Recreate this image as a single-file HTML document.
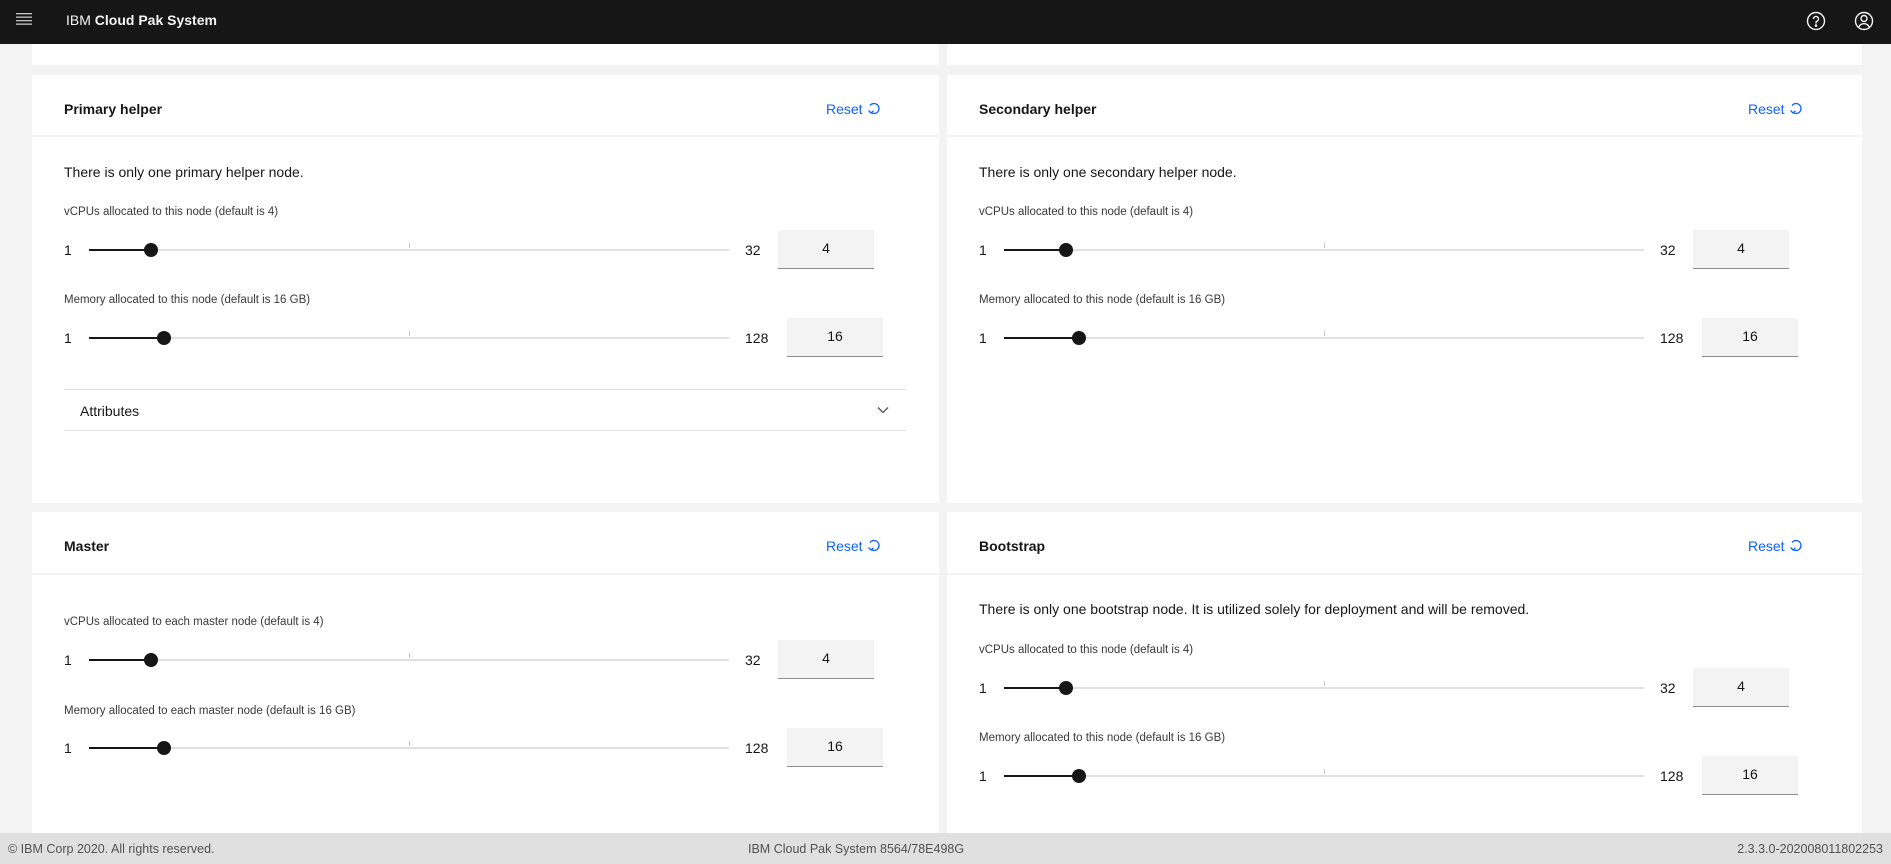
<!DOCTYPE html>
<html><head><meta charset="utf-8"><style>
*{box-sizing:border-box;margin:0;padding:0}
body{width:1891px;height:864px;overflow:hidden;background:#f3f3f3;font-family:"Liberation Sans",sans-serif;color:#161616;position:relative}
.a{position:absolute}
.hdr{left:0;top:0;width:1891px;height:44px;background:#161616}
.card{background:#fff}
.title{font-size:14px;font-weight:bold}
.reset{color:#0f62fe;font-size:14px}
.t14{font-size:14px}
.lbl{font-size:11.5px;color:#393939}
.num{font-size:14px}
.track{height:2px;background:#e0e0e0}
.fill{height:2px;background:#161616}
.thumb{width:14px;height:14px;border-radius:50%;background:#161616}
.tick{width:1px;height:5px;background:#c6c6c6}
.inp{background:#f3f3f3;border-bottom:1px solid #8d8d8d;font-size:14px;text-align:center}
.line{height:2px;background:#f3f3f3}
</style></head><body>
<div class="a hdr"></div>
<svg class="a" style="left:16px;top:13px" width="16" height="12"><rect y="0" width="16" height="1.3" fill="#c6c6c6"/><rect y="3.5" width="16" height="1.3" fill="#c6c6c6"/><rect y="7" width="16" height="1.3" fill="#c6c6c6"/><rect y="10.5" width="16" height="1.3" fill="#c6c6c6"/></svg>
<div class="a" style="left:66px;top:12px;font-size:14px;color:#f4f4f4">IBM <b>Cloud Pak System</b></div>
<svg class="a" style="left:1806px;top:11px" width="20" height="20" viewBox="0 0 20 20" fill="none" stroke="#f4f4f4" stroke-width="1.4"><circle cx="10" cy="10" r="8.5"/><path d="M7.5 8a2.5 2.5 0 1 1 3.5 2.2c-.7.3-1 .8-1 1.5v.8"/><circle cx="10" cy="14.6" r=".6" fill="#f4f4f4"/></svg>
<svg class="a" style="left:1854px;top:11px" width="20" height="20" viewBox="0 0 20 20" fill="none" stroke="#f4f4f4" stroke-width="1.4"><circle cx="10" cy="10" r="8.5"/><circle cx="10" cy="7.5" r="3"/><path d="M4.8 16c1-2.3 3-3.3 5.2-3.3s4.2 1 5.2 3.3"/></svg>

<div class="a card" style="left:32px;top:44px;width:907px;height:21px"></div>
<div class="a card" style="left:947px;top:44px;width:915px;height:21px"></div>

<!-- Primary helper -->
<div class="a card" style="left:32px;top:75px;width:907px;height:428px"></div>
<div class="a line" style="left:32px;top:135px;width:907px"></div>
<div class="a title" style="left:64px;top:101px">Primary helper</div>
<div class="a reset" style="left:826px;top:101px">Reset</div>
<svg class="a" style="left:867px;top:101px" width="14" height="14" viewBox="0 0 14 14" fill="none" stroke="#0f62fe" stroke-width="1.3"><path d="M4 11.5A5 5 0 1 0 3 4.5"/><path d="M1.5 9.5L4 12l2.5-2.2"/></svg>
<div class="a t14" style="left:64px;top:164px">There is only one primary helper node.</div>
<div class="a lbl" style="left:64px;top:206px">vCPUs allocated to this node (default is 4)</div>
<div class="a num" style="left:64px;top:242px">1</div>
<div class="a track" style="left:89px;top:249px;width:640px"></div><div class="a tick" style="left:409px;top:243px"></div>
<div class="a fill" style="left:89px;top:249px;width:62px"></div><div class="a thumb" style="left:144px;top:243px"></div>
<div class="a num" style="left:745px;top:242px">32</div>
<div class="a inp" style="left:778px;top:230px;width:96px;height:39px;line-height:37px">4</div>
<div class="a lbl" style="left:64px;top:294px">Memory allocated to this node (default is 16 GB)</div>
<div class="a num" style="left:64px;top:330px">1</div>
<div class="a track" style="left:89px;top:337px;width:640px"></div><div class="a tick" style="left:409px;top:331px"></div>
<div class="a fill" style="left:89px;top:337px;width:75px"></div><div class="a thumb" style="left:157px;top:331px"></div>
<div class="a num" style="left:745px;top:330px">128</div>
<div class="a inp" style="left:787px;top:318px;width:96px;height:39px;line-height:37px">16</div>
<div class="a" style="left:64px;top:389px;width:842px;height:1px;background:#e0e0e0"></div>
<div class="a t14" style="left:80px;top:403px">Attributes</div>
<svg class="a" style="left:877px;top:406px" width="12" height="8" viewBox="0 0 12 8" fill="none" stroke="#525252" stroke-width="1.3"><path d="M1 1.5l5 5 5-5"/></svg>
<div class="a" style="left:64px;top:430px;width:842px;height:1px;background:#e0e0e0"></div>

<!-- Secondary helper -->
<div class="a card" style="left:947px;top:75px;width:915px;height:428px"></div>
<div class="a line" style="left:947px;top:135px;width:915px"></div>
<div class="a title" style="left:979px;top:101px">Secondary helper</div>
<div class="a reset" style="left:1748px;top:101px">Reset</div>
<svg class="a" style="left:1789px;top:101px" width="14" height="14" viewBox="0 0 14 14" fill="none" stroke="#0f62fe" stroke-width="1.3"><path d="M4 11.5A5 5 0 1 0 3 4.5"/><path d="M1.5 9.5L4 12l2.5-2.2"/></svg>
<div class="a t14" style="left:979px;top:164px">There is only one secondary helper node.</div>
<div class="a lbl" style="left:979px;top:206px">vCPUs allocated to this node (default is 4)</div>
<div class="a num" style="left:979px;top:242px">1</div>
<div class="a track" style="left:1004px;top:249px;width:640px"></div><div class="a tick" style="left:1324px;top:243px"></div>
<div class="a fill" style="left:1004px;top:249px;width:62px"></div><div class="a thumb" style="left:1059px;top:243px"></div>
<div class="a num" style="left:1660px;top:242px">32</div>
<div class="a inp" style="left:1693px;top:230px;width:96px;height:39px;line-height:37px">4</div>
<div class="a lbl" style="left:979px;top:294px">Memory allocated to this node (default is 16 GB)</div>
<div class="a num" style="left:979px;top:330px">1</div>
<div class="a track" style="left:1004px;top:337px;width:640px"></div><div class="a tick" style="left:1324px;top:331px"></div>
<div class="a fill" style="left:1004px;top:337px;width:75px"></div><div class="a thumb" style="left:1072px;top:331px"></div>
<div class="a num" style="left:1660px;top:330px">128</div>
<div class="a inp" style="left:1702px;top:318px;width:96px;height:39px;line-height:37px">16</div>

<!-- Master -->
<div class="a card" style="left:32px;top:512px;width:907px;height:330px"></div>
<div class="a line" style="left:32px;top:573px;width:907px"></div>
<div class="a title" style="left:64px;top:538px">Master</div>
<div class="a reset" style="left:826px;top:538px">Reset</div>
<svg class="a" style="left:867px;top:538px" width="14" height="14" viewBox="0 0 14 14" fill="none" stroke="#0f62fe" stroke-width="1.3"><path d="M4 11.5A5 5 0 1 0 3 4.5"/><path d="M1.5 9.5L4 12l2.5-2.2"/></svg>
<div class="a lbl" style="left:64px;top:616px">vCPUs allocated to each master node (default is 4)</div>
<div class="a num" style="left:64px;top:652px">1</div>
<div class="a track" style="left:89px;top:659px;width:640px"></div><div class="a tick" style="left:409px;top:653px"></div>
<div class="a fill" style="left:89px;top:659px;width:62px"></div><div class="a thumb" style="left:144px;top:653px"></div>
<div class="a num" style="left:745px;top:652px">32</div>
<div class="a inp" style="left:778px;top:640px;width:96px;height:39px;line-height:37px">4</div>
<div class="a lbl" style="left:64px;top:705px">Memory allocated to each master node (default is 16 GB)</div>
<div class="a num" style="left:64px;top:740px">1</div>
<div class="a track" style="left:89px;top:747px;width:640px"></div><div class="a tick" style="left:409px;top:741px"></div>
<div class="a fill" style="left:89px;top:747px;width:75px"></div><div class="a thumb" style="left:157px;top:741px"></div>
<div class="a num" style="left:745px;top:740px">128</div>
<div class="a inp" style="left:787px;top:728px;width:96px;height:39px;line-height:37px">16</div>

<!-- Bootstrap -->
<div class="a card" style="left:947px;top:512px;width:915px;height:330px"></div>
<div class="a line" style="left:947px;top:573px;width:915px"></div>
<div class="a title" style="left:979px;top:538px">Bootstrap</div>
<div class="a reset" style="left:1748px;top:538px">Reset</div>
<svg class="a" style="left:1789px;top:538px" width="14" height="14" viewBox="0 0 14 14" fill="none" stroke="#0f62fe" stroke-width="1.3"><path d="M4 11.5A5 5 0 1 0 3 4.5"/><path d="M1.5 9.5L4 12l2.5-2.2"/></svg>
<div class="a t14" style="left:979px;top:601px">There is only one bootstrap node. It is utilized solely for deployment and will be removed.</div>
<div class="a lbl" style="left:979px;top:644px">vCPUs allocated to this node (default is 4)</div>
<div class="a num" style="left:979px;top:680px">1</div>
<div class="a track" style="left:1004px;top:687px;width:640px"></div><div class="a tick" style="left:1324px;top:681px"></div>
<div class="a fill" style="left:1004px;top:687px;width:62px"></div><div class="a thumb" style="left:1059px;top:681px"></div>
<div class="a num" style="left:1660px;top:680px">32</div>
<div class="a inp" style="left:1693px;top:668px;width:96px;height:39px;line-height:37px">4</div>
<div class="a lbl" style="left:979px;top:732px">Memory allocated to this node (default is 16 GB)</div>
<div class="a num" style="left:979px;top:768px">1</div>
<div class="a track" style="left:1004px;top:775px;width:640px"></div><div class="a tick" style="left:1324px;top:769px"></div>
<div class="a fill" style="left:1004px;top:775px;width:75px"></div><div class="a thumb" style="left:1072px;top:769px"></div>
<div class="a num" style="left:1660px;top:768px">128</div>
<div class="a inp" style="left:1702px;top:756px;width:96px;height:39px;line-height:37px">16</div>

<!-- footer -->
<div class="a" style="left:0;top:833px;width:1891px;height:31px;background:#e0e0e0"></div>
<div class="a" style="left:8px;top:842px;font-size:12.5px;color:#525252">© IBM Corp 2020. All rights reserved.</div>
<div class="a" style="left:748px;top:842px;font-size:12.5px;color:#525252">IBM Cloud Pak System 8564/78E498G</div>
<div class="a" style="right:8px;top:842px;font-size:12.5px;color:#525252">2.3.3.0-202008011802253</div>
</body></html>
